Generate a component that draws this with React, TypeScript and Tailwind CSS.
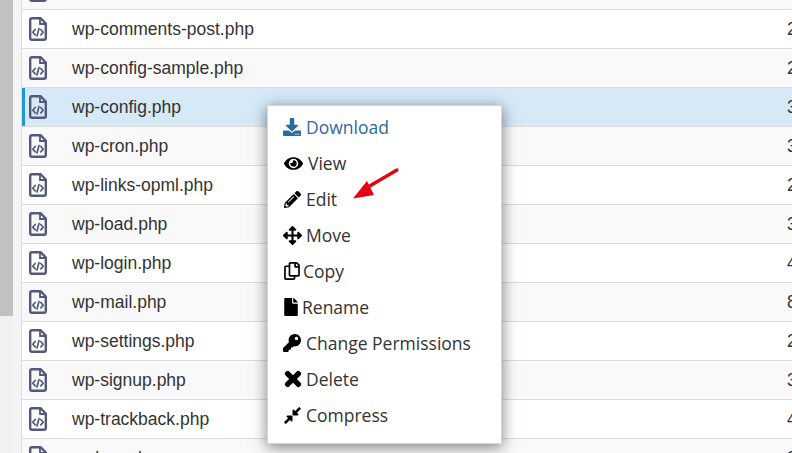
import type { ReactNode } from "react";
import {
  FaCompressAlt,
  FaDownload,
  FaEye,
  FaFile,
  FaArrowsAlt,
  FaKey,
  FaPencilAlt,
  FaRegCopy,
  FaTimes,
} from "react-icons/fa";

const files = [
  { name: "wp-blog-header.php", size: "2", bg: "bg-[#f9f9f9]" },
  { name: "wp-comments-post.php", size: "2", bg: "bg-white" },
  { name: "wp-config-sample.php", size: "2", bg: "bg-[#f9f9f9]" },
  { name: "wp-config.php", size: "3", bg: "bg-[#d5e9f7]", selected: true },
  { name: "wp-cron.php", size: "3", bg: "bg-[#f9f9f9]" },
  { name: "wp-links-opml.php", size: "2", bg: "bg-white" },
  { name: "wp-load.php", size: "3", bg: "bg-[#f9f9f9]" },
  { name: "wp-login.php", size: "4", bg: "bg-white" },
  { name: "wp-mail.php", size: "8", bg: "bg-[#f9f9f9]" },
  { name: "wp-settings.php", size: "2", bg: "bg-white" },
  { name: "wp-signup.php", size: "3", bg: "bg-[#f9f9f9]" },
  { name: "wp-trackback.php", size: "4", bg: "bg-white" },
  { name: "xmlrpc.php", size: "2", bg: "bg-[#f9f9f9]" },
];

const menuItems: { label: string; icon: ReactNode; iconBox: string; active?: boolean }[] = [
  { label: "Download", icon: <FaDownload className="shrink-0 text-[18px]" />, iconBox: "w-[23px]", active: true },
  { label: "View", icon: <FaEye className="ml-px shrink-0 text-[19px]" />, iconBox: "w-[25px]" },
  { label: "Edit", icon: <FaPencilAlt className="ml-px shrink-0 text-[17px]" />, iconBox: "w-[23px]" },
  { label: "Move", icon: <FaArrowsAlt className="shrink-0 text-[19px]" />, iconBox: "w-[23px]" },
  { label: "Copy", icon: <FaRegCopy className="shrink-0 text-[18px]" />, iconBox: "w-[20px]" },
  { label: "Rename", icon: <FaFile className="-ml-px shrink-0 text-[18px]" />, iconBox: "w-[19px]" },
  { label: "Change Permissions", icon: <FaKey className="shrink-0 text-[18px]" />, iconBox: "w-[23px]" },
  {
    label: "Delete",
    icon: <FaTimes className="-ml-px shrink-0 text-[22px]" stroke="currentColor" strokeWidth={30} />,
    iconBox: "w-[23px]",
  },
  { label: "Compress", icon: <FaCompressAlt className="shrink-0 text-[19px]" />, iconBox: "w-[23px]" },
];

function PhpFileIcon() {
  return (
    <svg width="18" height="24" viewBox="0 0 18 24" fill="none" className="shrink-0 text-[#53597b]">
      <path
        d="M3 1.2h8.5l5.3 5.3V21a1.8 1.8 0 0 1-1.8 1.8H3A1.8 1.8 0 0 1 1.2 21V3A1.8 1.8 0 0 1 3 1.2z"
        stroke="currentColor"
        strokeWidth="2.4"
        strokeLinejoin="round"
      />
      <path d="M11 1.5V7h5.5" stroke="currentColor" strokeWidth="1.8" />
      <path
        d="M6.2 12.5 3.8 15.2l2.4 2.7M11.8 12.5l2.4 2.7-2.4 2.7M10 11.5 8 19"
        stroke="currentColor"
        strokeWidth="1.7"
        strokeLinecap="round"
        strokeLinejoin="round"
      />
    </svg>
  );
}

function FileRow({ name, size, bg, selected }: { name: string; size: string; bg: string; selected?: boolean }) {
  return (
    <div className={`relative flex h-[39px] shrink-0 items-center border-b border-[#dddddd] pl-[7px] ${bg}`}>
      {selected && <div className="absolute top-0 bottom-0 left-0 w-[3px] bg-[#1b9ad6]" />}
      <PhpFileIcon />
      <span className="ml-[25px] w-[715px] shrink-0 text-[17.5px] text-[#333333]">{name}</span>
      <span className="shrink-0 text-[17.5px] text-[#333333]">{size}</span>
    </div>
  );
}

function ContextMenu() {
  return (
    <div className="absolute top-[105px] left-[267px] w-[235px] border border-[#d8d8d0] bg-white pt-[3px] pb-[10px] pl-[15px] font-['Open_Sans',sans-serif] text-[17.5px] shadow-[0_3px_14px_rgba(0,0,0,0.5)]">
      {menuItems.map((item) => (
        <div
          key={item.label}
          className={`flex h-[36px] items-center ${item.active ? "text-[#2f6a9f]" : "text-[#333333]"}`}
        >
          <span className={`flex shrink-0 items-center ${item.iconBox} ${item.active ? "text-[#2f6a9f]" : "text-black"}`}>
            {item.icon}
          </span>
          <span>{item.label}</span>
        </div>
      ))}
    </div>
  );
}

function RedArrow() {
  return (
    <svg width="60" height="40" viewBox="0 0 60 40" className="absolute top-[165px] left-[345px]">
      <path d="M52 5 23 22" stroke="#e60012" strokeWidth="3.2" strokeLinecap="round" />
      <path d="M8 33.5 22 16 29 30z" fill="#e60012" />
    </svg>
  );
}

export default function App() {
  return (
    <div className="relative flex h-[453px] w-[792px] overflow-hidden bg-[#f4f4f4] font-['Liberation_Sans',Arial,sans-serif]">
      <div className="h-full w-[13px] shrink-0 bg-[#f1f1f1]">
        <div className="h-[316px] bg-[#c1c1c1]" />
      </div>
      <div className="ml-[8px] flex min-w-0 flex-1 flex-col overflow-hidden border-l border-[#dddddd]">
        <div className="-mt-[29px] flex flex-col">
          {files.map((file) => (
            <FileRow key={file.name} {...file} />
          ))}
        </div>
      </div>
      <ContextMenu />
      <RedArrow />
    </div>
  );
}
